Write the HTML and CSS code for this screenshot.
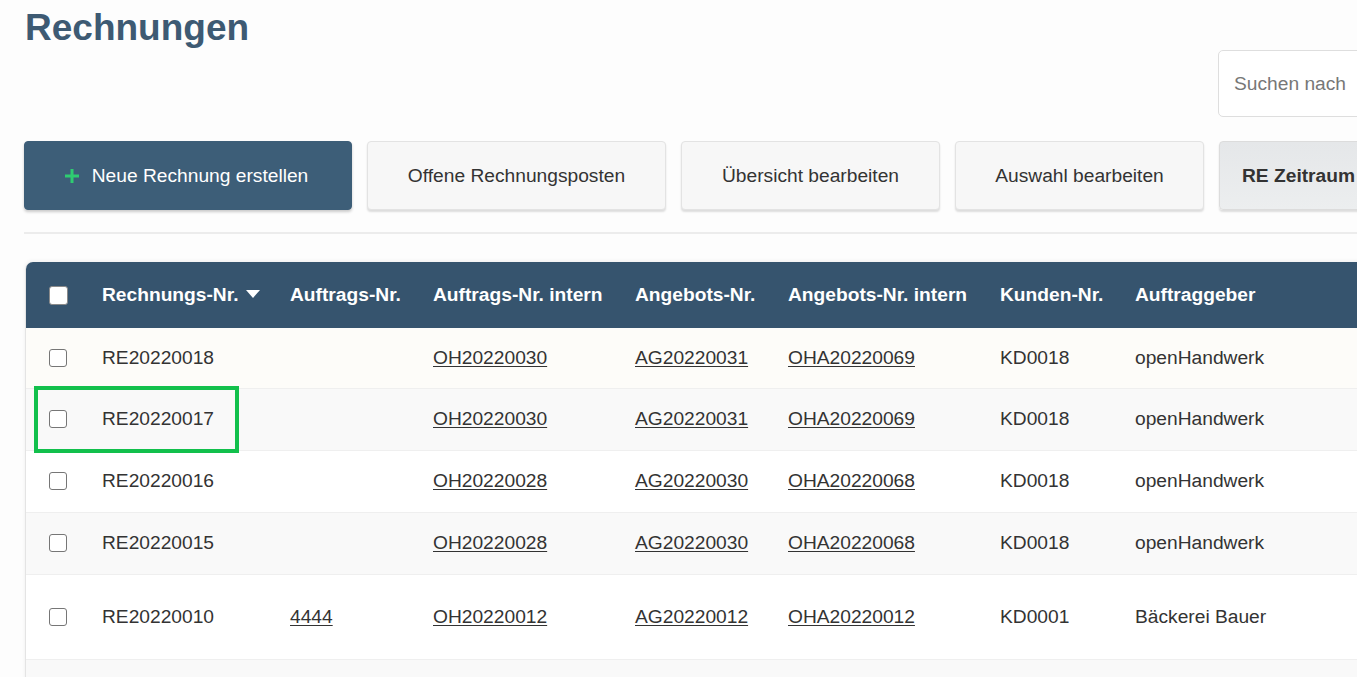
FILE: index.html
```html
<!DOCTYPE html>
<html lang="de">
<head>
<meta charset="UTF-8" />
<meta name="viewport" content="width=device-width, initial-scale=1" />
<title>Rechnungen</title>
<link rel="stylesheet" href="styles.css">
</head>
<body>
  <div class="page">
    <h1 class="page-title">Rechnungen</h1>

    <div class="search-row">
      <input class="search" type="text" placeholder="Suchen nach">
    </div>

    <div class="toolbar">
      <button class="btn btn-primary btn-new">
        <svg class="plus" width="16" height="16" viewBox="0 0 16 16" aria-hidden="true">
          <path d="M8 1v14M1 8h14" stroke="#2ecc71" stroke-width="3" fill="none"/>
        </svg>
        Neue Rechnung erstellen
      </button>
      <button class="btn btn-open">Offene Rechnungsposten</button>
      <button class="btn btn-overview">Übersicht bearbeiten</button>
      <button class="btn btn-select">Auswahl bearbeiten</button>
      <button class="btn btn-active">RE Zeitraum</button>
    </div>

    <hr class="divider">

    <div class="table-box">
      <table class="invoices">
        <colgroup>
          <col class="c-check">
          <col class="c-re">
          <col class="c-auf">
          <col class="c-aufi">
          <col class="c-ang">
          <col class="c-angi">
          <col class="c-kd">
          <col class="c-ag">
        </colgroup>
        <thead>
          <tr>
            <th class="check"><span class="box box-head"></span></th>
            <th>Rechnungs-Nr.
              <svg class="sort" width="14" height="8" viewBox="0 0 14 8" aria-hidden="true"><path d="M0 0h14L7 8z" fill="#fff"/></svg>
            </th>
            <th>Auftrags-Nr.</th>
            <th>Auftrags-Nr. intern</th>
            <th>Angebots-Nr.</th>
            <th>Angebots-Nr. intern</th>
            <th>Kunden-Nr.</th>
            <th>Auftraggeber</th>
          </tr>
        </thead>
        <tbody>
          <tr class="row-hover">
            <td class="check"><span class="box"></span></td>
            <td>RE20220018</td>
            <td></td>
            <td><a href="#">OH20220030</a></td>
            <td><a href="#">AG20220031</a></td>
            <td><a href="#">OHA20220069</a></td>
            <td>KD0018</td>
            <td>openHandwerk</td>
          </tr>
          <tr>
            <td class="check"><span class="box"></span></td>
            <td>RE20220017</td>
            <td></td>
            <td><a href="#">OH20220030</a></td>
            <td><a href="#">AG20220031</a></td>
            <td><a href="#">OHA20220069</a></td>
            <td>KD0018</td>
            <td>openHandwerk</td>
          </tr>
          <tr>
            <td class="check"><span class="box"></span></td>
            <td>RE20220016</td>
            <td></td>
            <td><a href="#">OH20220028</a></td>
            <td><a href="#">AG20220030</a></td>
            <td><a href="#">OHA20220068</a></td>
            <td>KD0018</td>
            <td>openHandwerk</td>
          </tr>
          <tr>
            <td class="check"><span class="box"></span></td>
            <td>RE20220015</td>
            <td></td>
            <td><a href="#">OH20220028</a></td>
            <td><a href="#">AG20220030</a></td>
            <td><a href="#">OHA20220068</a></td>
            <td>KD0018</td>
            <td>openHandwerk</td>
          </tr>
          <tr class="row-tall">
            <td class="check"><span class="box"></span></td>
            <td>RE20220010</td>
            <td><a href="#">4444</a></td>
            <td><a href="#">OH20220012</a></td>
            <td><a href="#">AG20220012</a></td>
            <td><a href="#">OHA20220012</a></td>
            <td>KD0001</td>
            <td>Bäckerei Bauer</td>
          </tr>
          <tr>
            <td class="check"><span class="box"></span></td>
            <td>&nbsp;</td>
            <td></td>
            <td></td>
            <td></td>
            <td></td>
            <td></td>
            <td></td>
          </tr>
        </tbody>
      </table>
      <!-- Markierung im Screenshot -->
      <div class="highlight"></div>
    </div>
  </div>
</body>
</html>
```

FILE: styles.css
```css
:root {
  --title-color: #3d5a73;
  --head-bg: #36546e;
  --primary-bg: #3d5e78;
  --text-color: #333;
  --row-alt: #f9f9f9;
  --line-color: #ececec;
}
* {
  box-sizing: border-box;
}
html, body {
  margin: 0;
  overflow: hidden;
}
body {
  font-family: 'Liberation Sans', Arial, sans-serif;
  background-color: #fdfdfd;
  color: var(--text-color);
  font-size: 19.2px;
}
.page {
  width: 1700px;
  padding-left: 24px;
}
.page-title {
  margin: 9px 0 0 1px;
  font-size: 37px;
  line-height: 38px;
  font-weight: bold;
  color: var(--title-color);
}

/* Suche rechts oben */
.search-row {
  display: flex;
  justify-content: flex-end;
  margin-top: 3px;
}
.search {
  width: 482px;
  height: 67px;
  border: 1px solid #dedede;
  border-radius: 5px;
  background: #fff;
  padding: 0 15px;
  font-family: inherit;
  font-size: 19.2px;
  color: var(--text-color);
}
.search::placeholder {
  color: #777;
}

/* Buttons */
.toolbar {
  display: flex;
  gap: 15px;
  margin-top: 24px;
}
.btn {
  height: 69px;
  border: 1px solid #e3e3e3;
  border-radius: 4px;
  background-color: #f7f7f7;
  box-shadow: 0 2px 2px rgba(0,0,0,0.13);
  font-family: inherit;
  font-size: 19.2px;
  color: var(--text-color);
  cursor: pointer;
  display: flex;
  align-items: center;
  justify-content: center;
  gap: 12px;
  padding: 0;
}
.btn-primary {
  background-color: var(--primary-bg);
  border-color: var(--primary-bg);
  color: #fff;
  box-shadow: 0 2px 3px rgba(0,0,0,0.2);
}
.btn-new { width: 328px; padding-right: 4px; }
.btn-open { width: 299px; }
.btn-overview { width: 259px; }
.btn-select { width: 249px; }
.btn-active {
  width: 300px;
  justify-content: flex-start;
  padding-left: 22px;
  font-weight: bold;
  background: linear-gradient(#e5e7e9, #eceeef);
  border-color: #dcdcdc;
}

.divider {
  margin: 22px 0 0;
  border: none;
  border-top: 2px solid var(--line-color);
}

/* Tabelle */
.table-box {
  position: relative;
  margin-top: 28px;
  margin-left: 1px;
  border-left: 1px solid #e4e4e4;
  border-radius: 7px 0 0 0;
  box-shadow: 0 -1px 4px rgba(0,0,0,0.06);
}
.invoices {
  width: 1600px;
  table-layout: fixed;
  border-collapse: collapse;
}
.c-check { width: 59px; }
.c-re { width: 188px; }
.c-auf { width: 143px; }
.c-aufi { width: 202px; }
.c-ang { width: 153px; }
.c-angi { width: 212px; }
.c-kd { width: 135px; }
.invoices th,
.invoices td {
  padding: 0 17px;
  text-align: left;
  white-space: nowrap;
}
.invoices thead tr {
  background-color: var(--head-bg);
  height: 66px;
}
.invoices th {
  color: #fff;
  font-weight: bold;
  font-size: 19.2px;
}
.invoices thead th:first-child {
  border-radius: 7px 0 0 0;
}
.invoices .sort {
  margin-left: 2px;
  vertical-align: 3px;
}
.invoices td.check,
.invoices th.check {
  padding: 0 0 0 23px;
}
.invoices tbody tr {
  height: 62px;
  border-top: 1px solid #efefef;
  background-color: #fff;
}
.invoices tbody tr:nth-child(even) {
  background-color: var(--row-alt);
}
.invoices tbody tr.row-hover {
  height: 60px;
  border-top: none;
  background-color: #fdfcf9;
}
.invoices tbody tr.row-tall {
  height: 85px;
}
.invoices a {
  color: var(--text-color);
  text-decoration: underline;
  text-underline-offset: 2px;
}
.box {
  display: block;
  width: 18px;
  height: 18px;
  border: 1.5px solid #767676;
  border-radius: 3px;
  background: #fff;
}
.box-head {
  width: 19px;
  height: 19px;
  border-color: #8a8a8a;
}

/* grüne Markierung über der Zeile */
.highlight {
  position: absolute;
  left: 8px;
  top: 124px;
  width: 205px;
  height: 67px;
  border: 4px solid #12c04c;
  pointer-events: none;
}
```
